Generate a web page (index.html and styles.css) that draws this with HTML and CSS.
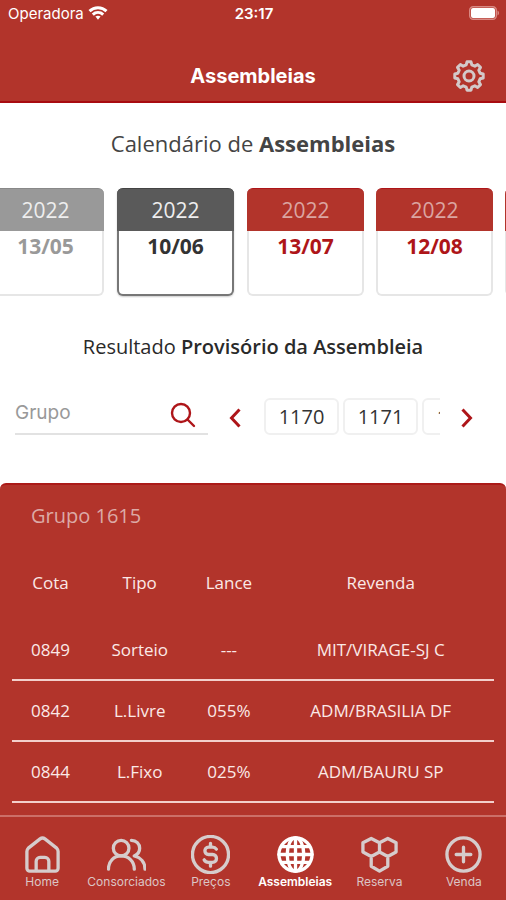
FILE: index.html
```html
<!DOCTYPE html>
<html lang="pt-BR">
<head>
<meta charset="utf-8">
<meta name="viewport" content="width=device-width, initial-scale=1">
<title>Assembleias</title>
<link rel="stylesheet" href="styles.css">
</head>
<body>
<header class="top">
  <div class="status">
    <div class="carrier">Operadora
      <svg width="20" height="14" viewBox="0 0 20 14" fill="none" stroke="#fff" stroke-width="3" aria-hidden="true"><path d="M1.5 5.2C6.3 .7 13.7 .7 18.5 5.2"/><path d="M4.8 8.6c3-2.7 7.4-2.7 10.4 0"/><path d="M7.4 10.6c1.6-1.2 3.6-1.2 5.2 0L10 13.8z" fill="#fff" stroke="none"/></svg>
    </div>
    <div class="clock">23:17</div>
    <svg class="battery" width="31" height="14" viewBox="0 0 31 14" aria-hidden="true"><rect x=".7" y=".7" width="26.6" height="12.6" rx="3.5" fill="none" stroke="#d98983" stroke-width="1.4"/><rect x="2" y="2" width="24" height="10" rx="2" fill="#fff"/><path d="M28.5 4.5c2 .8 2 4.2 0 5z" fill="#d98983"/></svg>
  </div>
  <div class="titlebar">
    <h1>Assembleias</h1>
    <button class="icon-btn" type="button" aria-label="Configurações">
      <svg width="32" height="32" viewBox="0 0 32 32" fill="none" stroke="#d3c9c9" stroke-width="3" stroke-linejoin="round"><path d="M13.2 4.9 14 1.8h4l.8 3.1 3 1.3 2.8-1.7 2.9 2.9-1.7 2.8 1.3 3 3.1.8v4l-3.1.8-1.3 3 1.700 2.8-2.9 2.9-2.8-1.7-3 1.3-.8 3.1h-4l-.8-3.1-3-1.3-2.8 1.7-2.9-2.9 1.7-2.8-1.3-3L1.8 18v-4l3.1-.8 1.3-3-1.7-2.8 2.9-2.9 2.8 1.7z"/><circle cx="16" cy="16" r="5"/></svg>
    </button>
  </div>
</header>
<main>
  <h2 class="heading">Calendário de <b>Assembleias</b></h2>
  <div class="calendar">
    <button class="date past" type="button"><span class="year">2022</span><span class="day">13/05</span></button>
    <button class="date current" type="button"><span class="year">2022</span><span class="day">10/06</span></button>
    <button class="date" type="button"><span class="year">2022</span><span class="day">13/07</span></button>
    <button class="date" type="button"><span class="year">2022</span><span class="day">12/08</span></button>
    <button class="date" type="button" aria-label="Próxima data"><span class="year"></span></button>
  </div>
  <h2 class="heading small">Resultado <b>Provisório da Assembleia</b></h2>
  <div class="filters">
    <form class="search">
      <input type="text" placeholder="Grupo" aria-label="Grupo">
      <button class="icon-btn" type="button" aria-label="Buscar"><svg width="26" height="26" viewBox="0 0 26 26" fill="none" stroke="#ae1519" stroke-width="2.4" stroke-linecap="round"><circle cx="11" cy="11" r="9"/><path d="m17.5 17.5 6.5 6.5"/></svg></button>
    </form>
    <button class="icon-btn arrow" type="button" aria-label="Anterior"><svg width="12" height="20" viewBox="0 0 12 20" fill="none" stroke="#ae1519" stroke-width="3"><path d="M10.5 1.5 2.5 10l8 8.5"/></svg></button>
    <div class="groups">
      <button class="chip" type="button">1170</button>
      <button class="chip" type="button">1171</button>
      <button class="chip" type="button">1172</button>
    </div>
    <button class="icon-btn arrow" type="button" aria-label="Próximo"><svg width="12" height="20" viewBox="0 0 12 20" fill="none" stroke="#ae1519" stroke-width="3"><path d="M1.5 1.5 9.5 10l-8 8.5"/></svg></button>
  </div>
  <section class="panel">
    <h3>Grupo 1615</h3>
    <table>
      <colgroup><col class="c-cota"><col class="c-tipo"><col class="c-lance"><col></colgroup>
      <thead><tr><th>Cota</th><th>Tipo</th><th>Lance</th><th>Revenda</th></tr></thead>
      <tbody>
        <tr><td>0849</td><td>Sorteio</td><td>---</td><td>MIT/VIRAGE-SJ C</td></tr>
        <tr><td>0842</td><td>L.Livre</td><td>055%</td><td>ADM/BRASILIA DF</td></tr>
        <tr><td>0844</td><td>L.Fixo</td><td>025%</td><td>ADM/BAURU SP</td></tr>
      </tbody>
    </table>
  </section>
</main>
<nav class="tabs">
  <a href="#"><svg viewBox="0 0 40 40"><path d="M4 17c0-1.500.500-2.500 1.500-3.500L17.500 4c1.700-1.300 3.300-1.300 5 0l12 9.500c1 1 1.500 2 1.500 3.500V34a3 3 0 0 1-3 3H7a3 3 0 0 1-3-3z"/><path d="M13.500 36.500V27a4 4 0 0 1 4-4h5a4 4 0 0 1 4 4v9.500"/></svg>Home</a>
  <a href="#"><svg viewBox="0 0 40 40"><circle cx="14.500" cy="13.500" r="8"/><path d="M1.500 35c0-8 5.500-13.500 13-13.500S28 27 28 35"/><path d="M25 5.500c5 0 8.500 3.500 8.500 8 0 3.500-2.500 6.500-5.500 8 6.500 1.500 11 6.500 11 13.500"/></svg>Consorciados</a>
  <a href="#"><svg viewBox="0 0 40 40"><circle cx="20" cy="20" r="18.500"/><path d="M26 14.500c-1-1.500-2.500-2-4-2h-4c-5 0-5 7.500 0 7.500h4c5.500 0 5.500 8 0 8h-4c-2 0-3.500-.8-4.500-2.500M20 8.500v4M20 28v4"/></svg>Preços</a>
  <a href="#" class="active" aria-current="page"><svg viewBox="0 0 40 40"><circle cx="20" cy="20" r="17"/><ellipse cx="20" cy="20" rx="8.500" ry="17"/><path d="M20 3v34M3 20h34M6 12h28M6 28h28"/></svg>Assembleias</a>
  <a href="#"><svg viewBox="0 0 40 40"><path d="m11.500 3.500 8.500 4.500v9.500l-8.500 4.500L3 17.500V8zM28.500 3.500 37 8v9.500L28.500 22 20 17.500V8zM20 17.500l8.500 4.500v10L20 37l-8.500-5V22z"/></svg>Reserva</a>
  <a href="#"><svg viewBox="0 0 40 40"><circle cx="20" cy="20" r="17"/><path d="M20 12.500v15M12.500 20h15"/></svg>Venda</a>
</nav>
</body>
</html>
```
FILE: styles.css
```css
:root {
  --red: #b2342b;
  --deep: #ae1519;
  --muted: #dcc5c5;
}
* { box-sizing: border-box; }
body {
  margin: 0;
  min-height: 100vh;
  display: flex;
  flex-direction: column;
  background: #fff;
  color: #333;
  font-family: "Open Sans", sans-serif;
}
button { font: inherit; cursor: pointer; }
.icon-btn {
  display: flex;
  flex: none;
  padding: 0;
  border: 0;
  background: none;
}
.top {
  background: var(--red);
  border-bottom: 2px solid #a80c10;
  color: #fff;
  font-family: Inter, sans-serif;
}
.status {
  display: grid;
  grid-template-columns: 1fr auto 1fr;
  align-items: center;
  height: 26px;
  padding: 0 6px 0 8px;
  font-size: 15px;
}
.carrier { display: flex; align-items: center; gap: 4px; }
.clock { font-weight: 600; }
.battery { justify-self: end; }
.titlebar {
  display: grid;
  grid-template-columns: 1fr auto 1fr;
  align-items: center;
  height: 75px;
  padding: 24px 21px 0;
}
.titlebar h1 { grid-column: 2; margin: 0; font-size: 20px; font-weight: 700; }
.titlebar .icon-btn { justify-self: end; }

main { flex: 1; display: flex; flex-direction: column; }
.heading {
  margin: 25px 0 30px;
  color: #444;
  font-size: 22px;
  line-height: 30px;
  font-weight: 400;
  text-align: center;
}
.heading b { font-weight: 700; }
.heading.small { margin: 34px 0 35px; color: #2a2a2a; font-size: 20px; }
.heading.small b { font-weight: 600; }

.calendar {
  display: flex;
  gap: 13px;
  margin-left: -13px;
  padding-bottom: 2px;
  overflow: hidden;
}
.date {
  flex: 0 0 117px;
  display: flex;
  flex-direction: column;
  height: 108px;
  padding: 0;
  border: 2px solid #e6e6e6;
  border-top: 0;
  border-radius: 6px;
  background: #fff;
  color: var(--deep);
  font-size: 21px;
  line-height: 30px;
}
.date:nth-child(n+4) { margin-left: -1px; }
.year {
  height: 43px;
  margin: 0 -2px;
  align-self: stretch;
  border-top: 1px solid var(--deep);
  border-radius: 6px 6px 0 0;
  background: var(--red);
  color: #dba5a1;
  line-height: 42px;
}
.day { align-self: stretch; font-weight: 700; }
.past { color: #999; }
.past .year { background: #999; border-color: #888; color: #eee; }
.current { border-color: #777; color: #333; box-shadow: 0 1px 2px #ccc; }
.current .year { background: #5a5a5a; border-color: #444; color: #eee; }

.filters { display: flex; align-items: center; padding: 0 33px 0 15px; }
.search {
  flex: 1;
  min-width: 0;
  display: flex;
  align-items: center;
  height: 38px;
  padding-right: 12px;
  border-bottom: 2px solid #e2e2e2;
}
.search input {
  flex: 1;
  min-width: 0;
  padding: 0 0 6px;
  border: 0;
  outline: 0;
  background: none;
  color: #333;
  font: 19px Inter, sans-serif;
}
.search input::placeholder { color: #999; opacity: 1; }
.arrow { margin: 4px 0 0 21px; }
.groups {
  flex: 0 0 176px;
  display: flex;
  gap: 4px;
  margin-left: 23px;
  overflow: hidden;
}
.chip {
  flex: 0 0 75px;
  height: 37px;
  padding: 2px 0 0;
  border: 2px solid #f0f0f0;
  border-radius: 6px;
  background: #fff;
  color: #333;
  font-size: 20px;
  line-height: 30px;
}

.panel {
  flex: 1;
  margin-top: 48px;
  padding: 16px 12px 12px;
  border-top: 2px solid #ab1a18;
  border-radius: 6px 6px 0 0;
  background: var(--red);
  color: #fbe9e7;
}
.panel h3 {
  margin: 0 0 24px 19px;
  color: #dcaaa6;
  font-size: 20px;
  line-height: 30px;
  font-weight: 400;
}
table { width: 100%; table-layout: fixed; border-collapse: collapse; font-size: 17px; }
.c-cota { width: 16%; }
.c-tipo { width: 21%; }
.c-lance { width: 16%; }
th, td { padding: 0; height: 61px; font-weight: 400; text-align: center; }
th { height: 64px; padding-bottom: 9px; }
td { border-bottom: 2px solid #f3cfcb; }

.tabs {
  display: grid;
  grid-template-columns: repeat(6, 1fr);
  height: 86px;
  padding-top: 18px;
  border-top: 2px solid #cc6f68;
  background: var(--red);
  font: 12px/16px Inter, sans-serif;
}
.tabs a {
  display: flex;
  flex-direction: column;
  align-items: center;
  color: var(--muted);
  text-decoration: none;
}
.tabs svg {
  width: 39px;
  height: 39px;
  fill: none;
  stroke: #d6cccc;
  stroke-width: 3.4;
  stroke-linecap: round;
  stroke-linejoin: round;
}
.tabs .active { color: #fff; font-weight: 600; }
.tabs .active svg { stroke: #fff; }
```
